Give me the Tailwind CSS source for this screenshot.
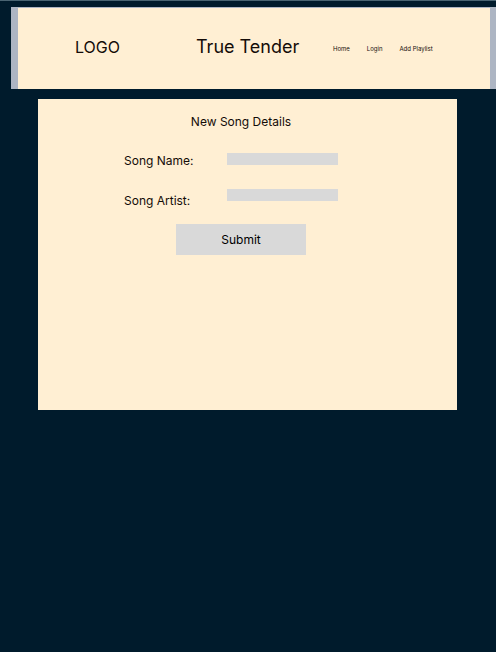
<!DOCTYPE html>
<html lang="en">
<head>
<meta charset="utf-8">
<meta name="viewport" content="width=device-width, initial-scale=1">
<title>True Tender</title>
<script src="https://cdn.jsdelivr.net/npm/@tailwindcss/browser@4"></script>
</head>
<body class="min-h-screen border-t border-[#4a6472] bg-[#001b2c] pt-[6px] font-['Inter',sans-serif] text-[#140c08]">
  <header class="ml-[11px] flex h-[82px] items-center border-t border-r-6 border-l-7 border-[#adb5c3] bg-[#ffefd3] pb-[3px] pl-[57px]">
    <a href="#" class="w-[121px] text-base leading-6">LOGO</a>
    <h1 class="w-[137px] text-lg leading-6 whitespace-nowrap">True Tender</h1>
    <nav class="flex gap-[17px] pt-[3px] text-[6px] leading-2 whitespace-nowrap">
      <a href="#">Home</a>
      <a href="#">Login</a>
      <a href="#">Add Playlist</a>
    </nav>
  </header>
  <main class="mt-[10px] mr-[39px] ml-[38px] min-h-[311px] bg-[#ffefd3] pt-[15px] pl-[86px] text-xs leading-4">
    <form class="w-[234px]">
      <h2 class="text-center">New Song Details</h2>
      <div class="mt-[22px] flex items-start">
        <div class="flex w-[103px] flex-col gap-6 pt-px">
          <label for="song-name">Song Name:</label>
          <label for="song-artist">Song Artist:</label>
        </div>
        <div class="flex w-[111px] flex-col gap-6 pt-px">
          <input id="song-name" type="text" class="h-3 w-full bg-[#d9d9d9] px-1 text-[8px] outline-none">
          <input id="song-artist" type="text" class="h-3 w-full bg-[#d9d9d9] px-1 text-[8px] outline-none">
        </div>
      </div>
      <button type="submit" class="mx-auto mt-[15px] block h-[31px] w-[130px] bg-[#d9d9d9] text-black">Submit</button>
    </form>
  </main>
</body>
</html>
